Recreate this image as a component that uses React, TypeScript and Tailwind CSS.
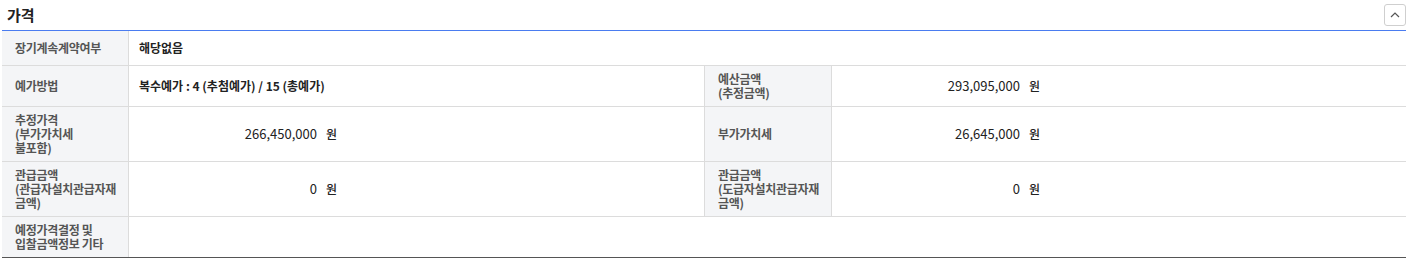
import React from "react";

const font = { fontFamily: '"Noto Sans CJK KR", "Noto Sans", sans-serif' };

function Label({ children, h }: { children: React.ReactNode; h: string }) {
  return (
    <div className={`flex items-center whitespace-nowrap bg-[#f4f5f7] border-b border-r border-[#dcdcdc] pl-[13px] text-[12px] leading-[14px] font-semibold tracking-[-0.3px] text-[#555] ${h}`}>
      <div>{children}</div>
    </div>
  );
}

function Amount({ value, last }: { value: string; last?: boolean }) {
  return (
    <div className={`flex items-center border-b border-[#dcdcdc] pl-[10px] text-[13px] text-[#222] ${last ? "" : "border-r"}`}>
      <span className="w-[178px] text-right">{value}</span>
      <span className="ml-[9px] text-[12px] font-medium">원</span>
    </div>
  );
}

export default function App() {
  return (
    <div className="w-[1410px] bg-white pl-[2px] pr-[4px]" style={font}>
      <div className="flex h-[30px] items-center justify-between">
        <h2 className="pl-[5px] text-[15px] font-bold text-[#222]">가격</h2>
        <button className="flex h-[22px] w-[22px] items-center justify-center rounded-[3px] border border-[#cfcfcf] bg-white">
          <svg width="10" height="6" viewBox="0 0 10 6" fill="none">
            <path d="M1 5 L5 1 L9 5" stroke="#555" strokeWidth="1.2" />
          </svg>
        </button>
      </div>

      <div className="grid grid-cols-[127px_576px_127px_1fr] border-t border-[#4a7cf0] border-b border-b-[#555]">
        <Label h="h-[35px]">장기계속계약여부</Label>
        <div className="col-span-3 flex items-center border-b border-[#dcdcdc] pl-[10px] text-[12px] font-semibold text-[#222]">
          해당없음
        </div>

        <Label h="h-[41px]">예가방법</Label>
        <div className="flex items-center border-b border-r border-[#dcdcdc] pl-[10px] text-[12px] font-semibold text-[#222]">
          복수예가 : 4 (추첨예가) / 15 (총예가)
        </div>
        <Label h="h-[41px]">
          예산금액
          <br />
          (추정금액)
        </Label>
        <Amount value="293,095,000" last />

        <Label h="h-[55px]">
          추정가격
          <br />
          (부가가치세
          <br />
          불포함)
        </Label>
        <Amount value="266,450,000" />
        <Label h="h-[55px]">부가가치세</Label>
        <Amount value="26,645,000" last />

        <Label h="h-[55px]">
          관급금액
          <br />
          (관급자설치관급자재
          <br />
          금액)
        </Label>
        <Amount value="0" />
        <Label h="h-[55px]">
          관급금액
          <br />
          (도급자설치관급자재
          <br />
          금액)
        </Label>
        <Amount value="0" last />

        <div className="flex h-[40px] items-center whitespace-nowrap bg-[#f4f5f7] border-r border-[#dcdcdc] pl-[13px] text-[12px] leading-[14px] font-semibold tracking-[-0.3px] text-[#555]">
          <div>
            예정가격결정 및
            <br />
            입찰금액정보 기타
          </div>
        </div>
        <div className="col-span-3" />
      </div>
    </div>
  );
}
